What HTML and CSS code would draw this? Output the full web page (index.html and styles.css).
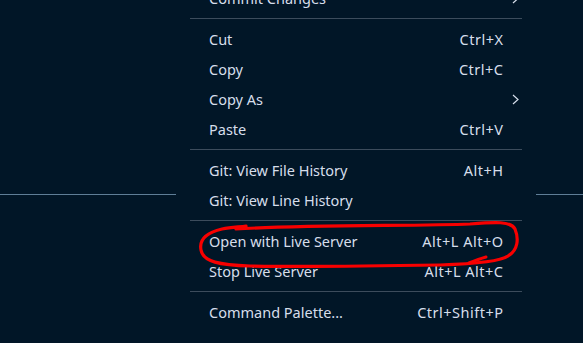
FILE: index.html
```html
<!DOCTYPE html>
<html lang="en">
<head>
  <meta charset="UTF-8" />
  <title>Context menu</title>
  <link rel="stylesheet" href="styles.css">
</head>
<body>
  <div class="editor">
    <div class="rule"></div>
  </div>
  <!-- context menu -->
  <div class="menu">
    <div class="item"><span class="label">Commit Changes</span><svg class="sub" width="7" height="11" viewBox="0 0 7 11"><path d="M1 1 L6 5.5 L1 10" fill="none" stroke="currentColor" stroke-width="1.2"/></svg></div>
    <div class="sep"></div>
    <div class="item"><span class="label">Cut</span><span class="key">Ctrl+X</span></div>
    <div class="item"><span class="label">Copy</span><span class="key">Ctrl+C</span></div>
    <div class="item"><span class="label">Copy As</span><svg class="sub" width="7" height="11" viewBox="0 0 7 11"><path d="M1 1 L6 5.5 L1 10" fill="none" stroke="currentColor" stroke-width="1.2"/></svg></div>
    <div class="item"><span class="label">Paste</span><span class="key">Ctrl+V</span></div>
    <div class="sep"></div>
    <div class="item"><span class="label">Git: View File History</span><span class="key">Alt+H</span></div>
    <div class="item"><span class="label">Git: View Line History</span></div>
    <div class="sep"></div>
    <div class="item"><span class="label">Open with Live Server</span><span class="key">Alt+L Alt+O</span></div>
    <div class="item"><span class="label">Stop Live Server</span><span class="key">Alt+L Alt+C</span></div>
    <div class="sep"></div>
    <div class="item"><span class="label">Command Palette...</span><span class="key">Ctrl+Shift+P</span></div>
  </div>
  <!-- hand drawn mark -->
  <svg class="mark" width="583" height="343" viewBox="0 0 583 343">
    <path d="M236 229 C300 225 420 226 470 224 C495 222 511 221 515 229 C519 239 518 250 508 256 C500 262 470 264 440 265 C380 266 300 267 250 266 C220 265 203 262 201 250 C199 240 205 233 222 229 C232 227 240 227 246 226" fill="none" stroke="#f80000" stroke-width="3.2" stroke-linecap="round" stroke-linejoin="round"/>
    <path d="M486 257 C479 259 474 261 469 263" fill="none" stroke="#f80000" stroke-width="3" stroke-linecap="round"/>
  </svg>
</body>
</html>
```

FILE: styles.css
```css
:root{--bg:#011627;--text:#d6deeb;--rule:#5f7e97;--sep:#3c4c5c}
*{box-sizing:border-box;margin:0;padding:0}
body{background:var(--bg);width:583px;height:343px;overflow:hidden;position:relative;font-family:'Noto Sans',sans-serif;color:var(--text)}
.editor{padding-top:194px}
.rule{height:1px;background:var(--rule)}
/* menu */
.menu{position:absolute;left:176px;top:-16px;width:360px;background:var(--bg);padding:0 14px}
.item{height:30px;display:flex;align-items:center;padding:0 19px 2px;font-size:14.5px;position:relative}
.key{margin-left:auto;letter-spacing:.5px;margin-right:-.5px}
.sub{position:absolute;right:3px;top:9px}
.sep{height:11px;display:flex;align-items:center;padding-bottom:3px}
.sep::after{content:"";height:1px;width:100%;background:var(--sep)}
.mark{position:absolute;left:0;top:0}
```
